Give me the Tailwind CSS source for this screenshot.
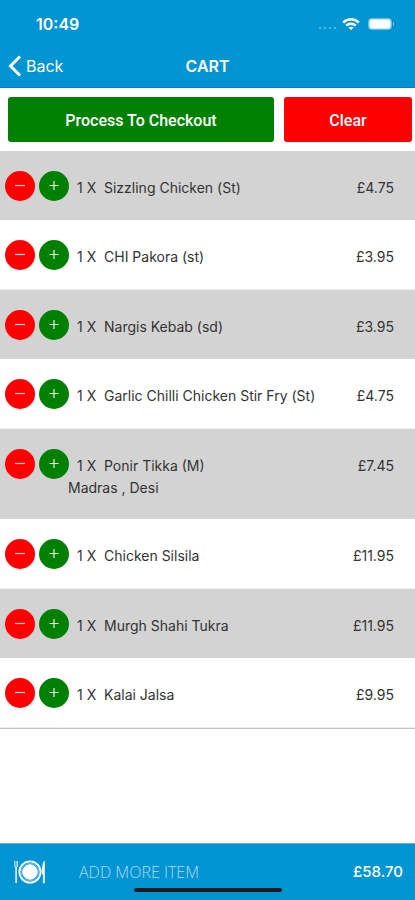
<!DOCTYPE html>
<html lang="en">
<head>
  <meta charset="UTF-8" />
  <meta name="viewport" content="width=device-width, initial-scale=1.0" />
  <title>Cart</title>
  <script src="https://cdn.jsdelivr.net/npm/@tailwindcss/browser@4"></script>
</head>
<body class="min-h-screen flex flex-col bg-white text-[#333333] font-['Inter',sans-serif]">
  <!-- Header -->
  <header class="bg-[#0095d2] text-white border-b border-[#0b7ab5]">
    <div class="h-11 flex items-center justify-between pl-9 pr-5 pt-1">
      <span class="font-semibold">10:49</span>
      <div class="flex items-center gap-1">
        <svg class="w-5 h-3 mt-2" viewBox="0 0 20 12" fill="#fff" fill-opacity=".3">
          <circle cx="2" cy="6" r="1.2" /><circle cx="7" cy="6" r="1.2" /><circle cx="12" cy="6" r="1.2" /><circle cx="17" cy="6" r="1.2" />
        </svg>
        <svg class="w-[18px] h-3" viewBox="0 0 18 12" fill="none" stroke="#fff" stroke-width="2.4">
          <path d="M1.2 4.6C5.6.2 12.4.2 16.8 4.6" /><path d="M4.2 7.7C6.9 5.1 11.1 5.1 13.8 7.7" />
          <path d="M9 12L6.4 9.6C7.9 8.3 10.1 8.3 11.6 9.6Z" fill="#fff" stroke="none" />
        </svg>
        <svg class="w-[27px] h-3 ml-1" viewBox="0 0 27 12">
          <rect x=".5" y=".5" width="23" height="11" rx="3" fill="none" stroke="#fff" stroke-opacity=".4" />
          <rect x="1.3" y="1.3" width="21.4" height="9.4" rx="2" fill="#fff" />
          <path d="M25 4C26.6 4.6 26.6 7.4 25 8Z" fill="#fff" fill-opacity=".5" />
        </svg>
      </div>
    </div>
    <nav class="h-[43px] grid grid-cols-3 items-center px-2 pt-px">
      <a href="#" class="flex items-center gap-1">
        <svg class="w-[14px] h-[22px]" viewBox="0 0 14 22" fill="none" stroke="#fff" stroke-width="3"><path d="M12 1.5L2.5 11L12 20.5" /></svg>
        Back
      </a>
      <h1 class="text-center font-semibold">CART</h1>
    </nav>
  </header>

  <main class="flex-1">
    <!-- Actions -->
    <div class="flex gap-[10px] pl-2 pr-[3px] py-[9px]">
      <button class="grow-[266] basis-0 h-[45px] pt-[2px] rounded-[3px] bg-[#008000] text-white font-medium font-['Roboto',sans-serif]">Process To Checkout</button>
      <button class="grow-[128] basis-0 h-[45px] pt-[2px] rounded-[3px] bg-[#ff0000] text-white font-medium font-['Roboto',sans-serif]">Clear</button>
    </div>

    <!-- Cart items -->
    <ul id="items" class="border-b border-[#c4c4c4] text-sm leading-6"></ul>
  </main>

  <!-- Footer -->
  <footer class="relative h-[57px] flex items-start bg-[#0095d2] border-t border-[#58b5dc] pl-[14px] pr-3 pt-4 text-white">
    <svg class="w-8 h-6" viewBox="0 0 32 24" fill="none" stroke="#fff">
      <circle cx="16" cy="12" r="10.6" stroke-width="1.8" />
      <circle cx="16" cy="12" r="7.3" fill="#fff" />
      <circle cx="16" cy="12" r="8.8" stroke-width=".8" stroke-opacity=".5" />
      <path d="M.7 1V6.5C.7 7.8 3.5 7.8 3.5 6.5V1M2.1 1V7" stroke-width=".9" stroke-opacity=".8" />
      <path d="M2.1 7V23" stroke-width="1.8" stroke-opacity=".8" />
      <path d="M30.5 1V23H29.3V14H28.2C28.2 8 28.7 3 30.5 1Z" fill="#fff" stroke-width=".6" />
    </svg>
    <a href="#" class="ml-[33px] leading-6 font-light text-[#b0dcf0] font-['Open_Sans',sans-serif]">ADD MORE ITEM</a>
    <span class="ml-auto text-[15px] leading-6 font-medium">£58.70</span>
    <span class="absolute bottom-2 left-1/2 -translate-x-1/2 w-[148px] h-1 rounded-full bg-[#1c1c1c]"></span>
  </footer>

  <script>
    const items = [
      { name: 'Sizzling Chicken (St)', price: '4.75' },
      { name: 'CHI Pakora (st)', price: '3.95' },
      { name: 'Nargis Kebab (sd)', price: '3.95' },
      { name: 'Garlic Chilli Chicken Stir Fry (St)', price: '4.75' },
      { name: 'Ponir Tikka (M)', price: '7.45', extra: 'Madras , Desi' },
      { name: 'Chicken Silsila', price: '11.95' },
      { name: 'Murgh Shahi Tukra', price: '11.95' },
      { name: 'Kalai Jalsa', price: '9.95' }
    ];

    document.getElementById('items').innerHTML = items.map(item => `
      <li class="odd:bg-[#d3d3d3] even:bg-white even:border-b even:border-[#eeeeee] last:border-b-0 pt-5 pb-[19px] pl-[5px] pr-[21px]">
        <div class="flex items-center h-[30px]">
          <button aria-label="Remove one" class="size-[30px] rounded-full bg-[#ff0000] flex items-center justify-center">
            <svg class="size-3" viewBox="0 0 12 12" stroke="#fff" stroke-opacity=".85" stroke-width="1.2"><path d="M1 5.5H11" /></svg>
          </button>
          <button aria-label="Add one" class="ml-1 size-[30px] rounded-full bg-[#008000] flex items-center justify-center">
            <svg class="size-3" viewBox="0 0 12 12" stroke="#fff" stroke-opacity=".9" stroke-width="1.2"><path d="M1.5 5.5H10.5M6 1V10" /></svg>
          </button>
          <span class="ml-2 w-[27px] pt-1">1 X</span>
          <span class="pt-1">${item.name}</span>
          <span class="ml-auto pt-1">£${item.price}</span>
        </div>
        ${item.extra ? `<p class="pl-[63px] h-[21px] leading-[18px]">${item.extra}</p>` : ''}
      </li>`).join('');
  </script>
</body>
</html>
